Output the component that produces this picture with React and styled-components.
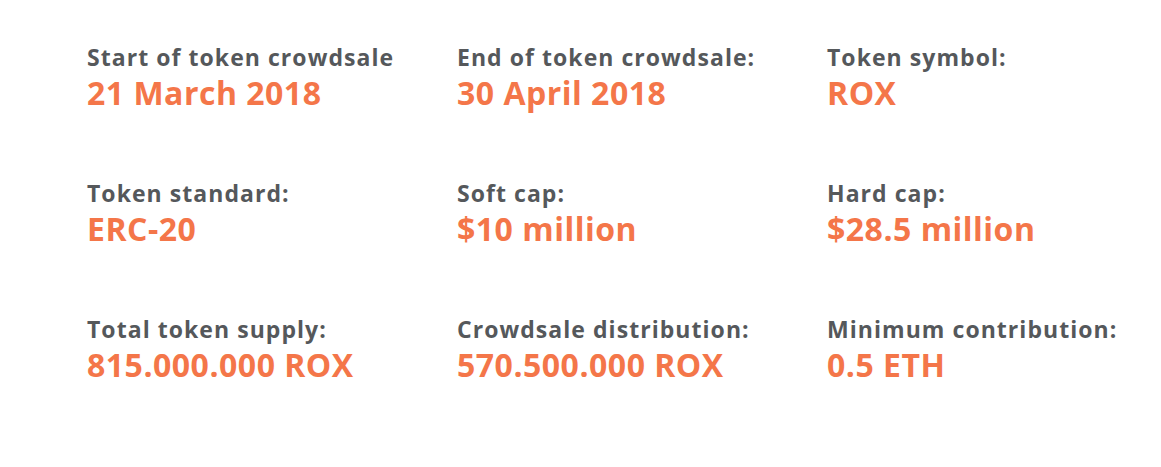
import React from "react";
import styled, { createGlobalStyle } from "styled-components";

const Global = createGlobalStyle`
  html, body { margin: 0; padding: 0; background: #ffffff; }
  body { font-family: "Open Sans", "DejaVu Sans", sans-serif; }
`;

const Section = styled.section`
  width: 1161px;
  height: 467px;
  box-sizing: border-box;
  padding: 41px 0 0 87px;
`;

const Grid = styled.div`
  display: grid;
  grid-template-columns: repeat(3, 370px);
  row-gap: 64px;
`;

const Item = styled.div`
  display: flex;
  flex-direction: column;
`;

const Label = styled.div`
  font-size: 23px;
  font-weight: 700;
  line-height: 32px;
  letter-spacing: 1.05px;
  color: #55585b;
  white-space: nowrap;
`;

const Value = styled.div`
  font-size: 32px;
  font-weight: 700;
  line-height: 40px;
  letter-spacing: 0.5px;
  color: #f47649;
  white-space: nowrap;
`;

const data = [
  ["Start of token crowdsale", "21 March 2018"],
  ["End of token crowdsale:", "30 April 2018"],
  ["Token symbol:", "ROX"],
  ["Token standard:", "ERC-20"],
  ["Soft cap:", "$10 million"],
  ["Hard cap:", "$28.5 million"],
  ["Total token supply:", "815.000.000 ROX"],
  ["Crowdsale distribution:", "570.500.000 ROX"],
  ["Minimum contribution:", "0.5 ETH"],
];

export default function App() {
  return (
    <>
      <Global />
      <Section>
        <Grid>
          {data.map(([l, v]) => (
            <Item key={l}>
              <Label>{l}</Label>
              <Value>{v}</Value>
            </Item>
          ))}
        </Grid>
      </Section>
    </>
  );
}
